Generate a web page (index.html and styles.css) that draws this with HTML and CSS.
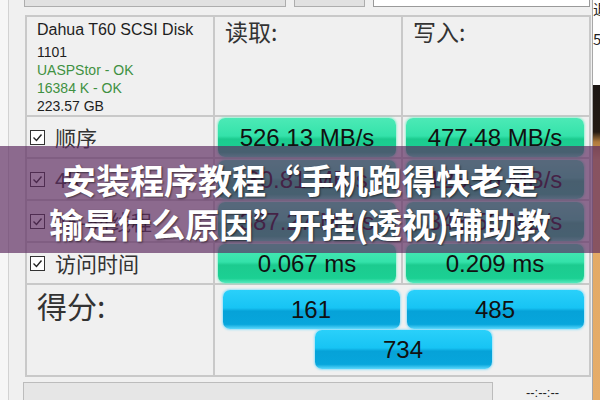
FILE: index.html
```html
<!DOCTYPE html>
<html>

<head>
    <meta charset="utf-8">
    <link rel="stylesheet" href="styles.css">
</head>

<body>
    <div class="desk">
        <div class="frame-left"></div>
        <div class="window">
            <div class="toolbar">
                <div class="combo drive"></div>
                <div class="combo size"></div>
                <div class="field"></div>
            </div>
            <div class="board">
                <div class="cell info">
                    <div class="model">Dahua T60 SCSI Disk</div>
                    <div>1101</div>
                    <div class="ok">UASPStor - OK</div>
                    <div class="ok">16384 K - OK</div>
                    <div>223.57 GB</div>
                </div>
                <div class="cell head">读取:</div>
                <div class="cell head">写入:</div>

                <div class="cell test">
                    <svg class="check" width="15" height="15" viewBox="0 0 15 15"><rect x="0.5" y="0.5" width="14" height="14" fill="#fff" stroke="#333"/><path d="M3.5 7.5 L6.5 10.5 L11.5 4.5" fill="none" stroke="#222" stroke-width="1.4"/></svg>
                    顺序
                </div>
                <div class="cell speed"><div class="bar">526.13 MB/s</div></div>
                <div class="cell speed"><div class="bar">477.48 MB/s</div></div>

                <div class="cell test">
                    <svg class="check" width="15" height="15" viewBox="0 0 15 15"><rect x="0.5" y="0.5" width="14" height="14" fill="#fff" stroke="#333"/><path d="M3.5 7.5 L6.5 10.5 L11.5 4.5" fill="none" stroke="#222" stroke-width="1.4"/></svg>
                    4K
                </div>
                <div class="cell speed"><div class="bar">30.81 MB/s</div></div>
                <div class="cell speed"><div class="bar">128.76 MB/s</div></div>

                <div class="cell test">
                    <svg class="check" width="15" height="15" viewBox="0 0 15 15"><rect x="0.5" y="0.5" width="14" height="14" fill="#fff" stroke="#333"/><path d="M3.5 7.5 L6.5 10.5 L11.5 4.5" fill="none" stroke="#222" stroke-width="1.4"/></svg>
                    4K-64线程
                </div>
                <div class="cell speed"><div class="bar">387.27 MB/s</div></div>
                <div class="cell speed"><div class="bar">348.52 MB/s</div></div>

                <div class="cell test">
                    <svg class="check" width="15" height="15" viewBox="0 0 15 15"><rect x="0.5" y="0.5" width="14" height="14" fill="#fff" stroke="#333"/><path d="M3.5 7.5 L6.5 10.5 L11.5 4.5" fill="none" stroke="#222" stroke-width="1.4"/></svg>
                    访问时间
                </div>
                <div class="cell speed"><div class="bar">0.067 ms</div></div>
                <div class="cell speed"><div class="bar">0.209 ms</div></div>

                <div class="cell score-label">得分:</div>
                <div class="cell scores">
                    <div class="bar blue">161</div>
                    <div class="bar blue">485</div>
                    <div class="bar blue">734</div>
                </div>
            </div>
            <div class="status">
                <div class="progress"></div>
                <div class="timer">--:--:--</div>
            </div>
        </div>
        <div class="backdrop">
            <div class="note">退出</div>
            <div class="note">50%</div>
        </div>
    </div>

    <div class="banner">
        <h1>安装程序教程“手机跑得快老是输是什么原因”开挂(透视)辅助教程</h1>
    </div>
</body>

</html>
```

FILE: styles.css
```css
body {
    margin: 0;
    background-color: #f0f0f0;
    font-family: 'Liberation Sans', 'Noto Sans CJK SC', sans-serif;
    overflow: hidden;
}

.desk {
    display: flex;
    width: 600px;
    height: 400px;
    overflow: hidden;
}

.frame-left {
    width: 8px;
    background-color: #f6f6f6;
    border-right: 1px solid #d2d2d2;
}

.window {
    width: 583px;
    background-color: #f0f0f0;
    display: flex;
    flex-direction: column;
}

/* top controls, only their lower edge shows */
.toolbar {
    display: flex;
    height: 7px;
}

.combo {
    height: 6px;
    background-color: #e1e1e1;
    border: 1px solid #adadad;
    border-top: none;
}

.drive {
    margin-left: 15px;
    width: 260px;
}

.size {
    margin-left: 8px;
    width: 69px;
}

.field {
    margin-left: 8px;
    margin-right: 2px;
    flex: 1;
    height: 6px;
    background-color: #fff;
    border: 1px solid #9a9a9a;
    border-top: none;
}

.board {
    margin-top: 8px;
    margin-left: 16px;
    width: 562px;
    display: grid;
    grid-template-columns: 186px 186px 186px;
    grid-template-rows: 98px 40px 40px 40px 40px 90px;
    gap: 2px;
    padding: 2px;
    background-color: #c9c9c9;
}

.cell {
    background-color: #f0f0f0;
    color: #2a2a2a;
}

.info {
    padding: 3px 10px;
    font-size: 14px;
    line-height: 18px;
    color: #1e1e1e;
}

.model {
    font-size: 16px;
    line-height: 20px;
    margin-bottom: 3px;
}

.ok {
    color: #3f9142;
}

.head {
    padding: 0 10px;
    font-family: 'Noto Sans CJK SC', sans-serif;
    font-size: 23px;
    line-height: 28px;
    color: #333;
}

.test {
    display: flex;
    align-items: center;
    gap: 10px;
    padding-left: 3px;
    font-family: 'Noto Sans CJK SC', sans-serif;
    font-size: 21px;
    color: #333;
}

.check {
    flex: none;
}

.speed {
    padding: 1px 5px 0 3px;
}

.bar {
    height: 39px;
    display: flex;
    align-items: center;
    justify-content: center;
    border-radius: 7px;
    font-size: 24px;
    color: #111;
    background: linear-gradient(#4ceab6, #34e2aa 46%, #1ccb8f 54%, #1bd093 88%, #52eabd);
    box-shadow: 0 0 2px 1px rgba(90, 240, 190, 0.55);
}

.score-label {
    padding: 0 10px;
    font-family: 'Noto Sans CJK SC', sans-serif;
    font-size: 30px;
    line-height: 40px;
    color: #333;
}

.scores {
    grid-column: span 2;
    display: flex;
    flex-wrap: wrap;
    justify-content: center;
    align-content: flex-start;
    column-gap: 7px;
    row-gap: 1px;
    padding: 5px 4px 0 6px;
}

.scores .bar {
    width: 177px;
}

.bar.blue {
    background: linear-gradient(#2ad0fa, #17c4f4 46%, #06a2d8 54%, #07a6dc 88%, #5cd8fc);
    box-shadow: 0 0 2px 1px rgba(100, 215, 255, 0.6);
}

.status {
    display: flex;
    margin-top: 5px;
}

.progress {
    margin-left: 14px;
    width: 468px;
    height: 30px;
    background-color: #e6e6e6;
    border: 1px solid #bcbcbc;
}

.timer {
    flex: 1;
    text-align: center;
    padding-top: 3px;
    font-size: 13px;
    line-height: 15px;
    color: #222;
}

.backdrop {
    flex: 1;
    background: linear-gradient(#ffffff 0, #ffffff 85px, #1c1714 85px, #241a12 132px, #b07a3c 142px, #e2a862 160px, #e6ad6a 400px);
    border-left: 1px solid #a8a8a8;
    overflow: hidden;
}

.note {
    white-space: nowrap;
    font-family: 'Noto Sans CJK SC', sans-serif;
    font-size: 15px;
    line-height: 18px;
    color: #222;
}

.note + .note {
    margin-top: 12px;
}

.banner {
    position: absolute;
    top: 146px;
    left: 0;
    width: 600px;
    height: 107px;
    background-color: rgba(93, 43, 96, 0.68);
    display: flex;
    justify-content: center;
}

.banner h1 {
    width: 506px;
    margin: 0;
    padding-top: 12px;
    height: 88px;
    overflow: hidden;
    font-family: 'Noto Sans CJK SC', sans-serif;
    font-weight: 700;
    font-size: 34px;
    line-height: 44px;
    text-align: center;
    color: #fff;
    text-shadow: 1px 1px 2px rgba(0, 0, 0, 0.55);
}
```
